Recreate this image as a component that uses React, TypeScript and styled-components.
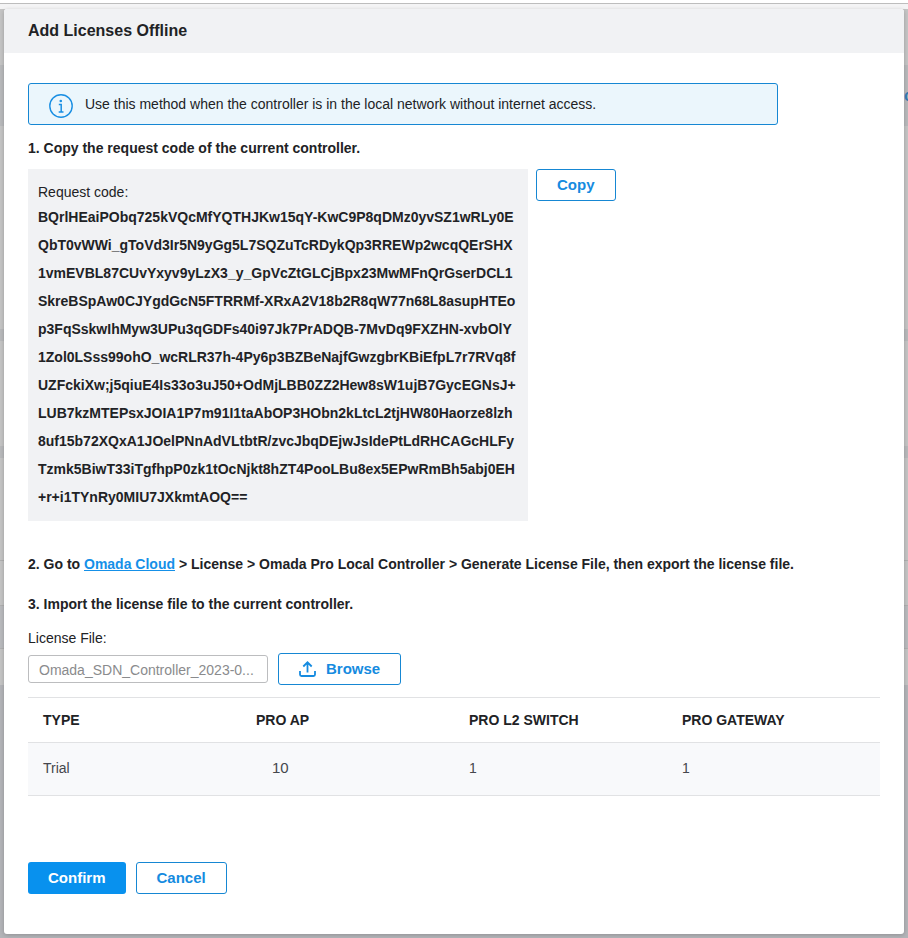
import React from 'react';
import styled, { createGlobalStyle, css } from 'styled-components';

const GlobalStyle = createGlobalStyle`
  *, *::before, *::after { box-sizing: border-box; }
  body {
    margin: 0;
    background: #b5b6ba;
    color: #212225;
    font-family: "Liberation Sans", Arial, sans-serif;
    font-size: 14px;
    line-height: 20px;
  }
`;

const Page = styled.div`
  min-height: 100vh;
  display: flex;
  flex-direction: column;
  position: relative;
  overflow: hidden;
`;

const TopBar = styled.div`
  height: 9px;
  border-top: 3px solid #ffffff;
  background: #f4f4f5;
  box-shadow: inset 0 1px 0 #bdbdbd;
`;

const Backdrop = styled.div`
  flex: 1;
  display: flex;
  padding: 0 4px 4px;
  background: linear-gradient(
    #c4c4c4 0 56px,
    #b8b9bb 56px 117px,
    #c4c4c4 117px 320px,
    #b8b9bb 320px 332px,
    #c4c4c4 332px 437px,
    #b8b9bb 437px 449px,
    #c4c4c4 449px 551px,
    #b0b0b0 551px 552px,
    #c4c4c4 552px 596px,
    #b0b0b0 596px 597px,
    #b9babd 597px 639px,
    #b0b0b0 639px 640px,
    #c4c4c4 640px 676px,
    #b3b4b8 676px
  );
`;

const BehindText = styled.span`
  position: absolute;
  top: 86px;
  left: calc(100% - 4px);
  color: #3577ad;
  font-size: 16px;
  font-weight: bold;
`;

const Dialog = styled.section`
  flex: 1;
  display: flex;
  flex-direction: column;
  min-width: 0;
  background: #ffffff;
  border-radius: 3px;
  box-shadow: 0 1px 4px rgba(0, 0, 0, 0.2);
  overflow: hidden;
`;

const DialogHeader = styled.header`
  padding: 10px 24px;
  background: #f1f2f4;
`;

const DialogTitle = styled.h1`
  margin: 0;
  font-size: 16px;
  line-height: 24px;
`;

const DialogBody = styled.div`
  padding: 30px 24px 40px;
`;

const Notice = styled.div`
  display: flex;
  align-items: flex-start;
  gap: 12px;
  max-width: 750px;
  min-height: 42px;
  padding: 10px 20px 6px;
  border: 1px solid #1687d3;
  border-radius: 3px;
  background: #ebf6fc;
`;

const Step = styled.h2`
  margin: 0;
  font-size: 14px;
  line-height: 20px;
`;

const StepOne = styled(Step)`
  margin: 13px 0 11px;
`;

const StepTwo = styled(Step)`
  margin: 33px 0 20px;
`;

const Link = styled.a`
  color: #1590e8;
  text-underline-offset: 1px;
`;

const CodeRow = styled.div`
  display: flex;
  align-items: flex-start;
  gap: 8px;
`;

const CodeBox = styled.div`
  width: 500px;
  padding: 12px 10px 10px;
  background: #f1f2f4;
`;

const CodeLabel = styled.div`
  line-height: 22px;
`;

const Code = styled.div`
  font-weight: bold;
  line-height: 28px;
  white-space: pre;
`;

const Button = styled.button<{ $primary?: boolean }>`
  display: inline-flex;
  align-items: center;
  justify-content: center;
  gap: 10px;
  height: 32px;
  padding: 0 20px;
  border: 1px solid #1687d3;
  border-radius: 3px;
  background: #ffffff;
  color: #158be0;
  font: bold 15px/20px "Liberation Sans", Arial, sans-serif;
  cursor: pointer;
  ${({ $primary }) =>
    $primary &&
    css`
      padding: 0 20px;
      border: 0;
      background: #0891ee;
      color: #ffffff;
    `}
`;

const FieldLabel = styled.label`
  display: block;
  margin: 14px 0 5px;
`;

const FileRow = styled.div`
  display: flex;
  align-items: center;
  gap: 10px;
  margin-bottom: 12px;
`;

const FileInput = styled.input`
  width: 240px;
  height: 28px;
  padding: 1px 10px 0;
  border: 1px solid #bcbdbf;
  border-radius: 3px;
  background: #ffffff;
  color: #8a8b8d;
  font: 14px/20px "Liberation Sans", Arial, sans-serif;
  text-overflow: ellipsis;
`;

const Table = styled.table`
  width: 100%;
  border-spacing: 0;
  table-layout: fixed;
  border-top: 1px solid #e1e2e4;
`;

const HeadCell = styled.th`
  height: 45px;
  padding: 0 15px;
  border-bottom: 1px solid #e1e2e4;
  text-align: left;
`;

const Cell = styled.td<{ $indented?: boolean }>`
  height: 53px;
  padding: 0 ${({ $indented }) => ($indented ? 31 : 15)}px 2px;
  border-bottom: 1px solid #e1e2e4;
  background: #f8f9fb;
  color: #45474d;
  font-size: ${({ $indented }) => ($indented ? 15 : 14)}px;
`;

const Actions = styled.footer`
  display: flex;
  gap: 10px;
  margin-top: 66px;
`;

const InfoIcon = () => (
  <svg width="24" height="24" viewBox="0 0 24 24" fill="none" aria-hidden="true">
    <circle cx="12" cy="12" r="11.200" stroke="#1a8fe3" strokeWidth="1.400" />
    <circle cx="11.8" cy="7" r="1.300" fill="#1a8fe3" />
    <path d="M9.8 10.400h2.400v7.400M9.700 18h4.800" stroke="#1a8fe3" strokeWidth="1.500" />
  </svg>
);

const UploadIcon = () => (
  <svg width="17" height="16" viewBox="0 0 17 16" fill="none" stroke="#158be0" strokeWidth="1.800" aria-hidden="true">
    <path d="M1 10v3.500q0 1.500 1.500 1.500h12q1.500 0 1.500-1.500V10" />
    <path d="M8.500 11.500V1.800M4.300 5.500l4.200-4.200 4.200 4.200" />
  </svg>
);

const CODE_LINES = [
  'BQrlHEaiPObq725kVQcMfYQTHJKw15qY-KwC9P8qDMz0yvSZ1wRLy0E',
  'QbT0vWWi_gToVd3Ir5N9yGg5L7SQZuTcRDykQp3RREWp2wcqQErSHX',
  '1vmEVBL87CUvYxyv9yLzX3_y_GpVcZtGLCjBpx23MwMFnQrGserDCL1',
  'SkreBSpAw0CJYgdGcN5FTRRMf-XRxA2V18b2R8qW77n68L8asupHTEo',
  'p3FqSskwIhMyw3UPu3qGDFs40i97Jk7PrADQB-7MvDq9FXZHN-xvbOlY',
  '1Zol0LSss99ohO_wcRLR37h-4Py6p3BZBeNajfGwzgbrKBiEfpL7r7RVq8f',
  'UZFckiXw;j5qiuE4Is33o3uJ50+OdMjLBB0ZZ2Hew8sW1ujB7GycEGNsJ+',
  'LUB7kzMTEPsxJOIA1P7m91I1taAbOP3HObn2kLtcL2tjHW80Haorze8lzh',
  '8uf15b72XQxA1JOelPNnAdVLtbtR/zvcJbqDEjwJsIdePtLdRHCAGcHLFy',
  'Tzmk5BiwT33iTgfhpP0zk1tOcNjkt8hZT4PooLBu8ex5EPwRmBh5abj0EH',
  '+r+i1TYnRy0MIU7JXkmtAOQ==',
];

const COLUMNS = ['TYPE', 'PRO AP', 'PRO L2 SWITCH', 'PRO GATEWAY'];

export default function App() {
  return (
    <Page>
      <GlobalStyle />
      <TopBar />
      <Backdrop>
        <BehindText aria-hidden="true">c</BehindText>
        <Dialog role="dialog" aria-labelledby="dialog-title">
          <DialogHeader>
            <DialogTitle id="dialog-title">Add Licenses Offline</DialogTitle>
          </DialogHeader>
          <DialogBody>
            <Notice>
              <InfoIcon />
              <span>Use this method when the controller is in the local network without internet access.</span>
            </Notice>
            <StepOne>1. Copy the request code of the current controller.</StepOne>
            <CodeRow>
              <CodeBox>
                <CodeLabel>Request code:</CodeLabel>
                <Code>{CODE_LINES.join('\n')}</Code>
              </CodeBox>
              <Button type="button">Copy</Button>
            </CodeRow>
            <StepTwo>
              2. Go to <Link href="#omada-cloud">Omada Cloud</Link> &gt; License &gt; Omada Pro Local Controller &gt;
              Generate License File, then export the license file.
            </StepTwo>
            <Step>3. Import the license file to the current controller.</Step>
            <FieldLabel htmlFor="license-file">License File:</FieldLabel>
            <FileRow>
              <FileInput id="license-file" type="text" readOnly value="Omada_SDN_Controller_2023-0..." />
              <Button type="button">
                <UploadIcon />
                Browse
              </Button>
            </FileRow>
            <Table>
              <thead>
                <tr>
                  {COLUMNS.map((name) => (
                    <HeadCell key={name} scope="col">{name}</HeadCell>
                  ))}
                </tr>
              </thead>
              <tbody>
                <tr>
                  <Cell>Trial</Cell>
                  <Cell $indented>10</Cell>
                  <Cell>1</Cell>
                  <Cell>1</Cell>
                </tr>
              </tbody>
            </Table>
            <Actions>
              <Button type="button" $primary>Confirm</Button>
              <Button type="button">Cancel</Button>
            </Actions>
          </DialogBody>
        </Dialog>
      </Backdrop>
    </Page>
  );
}
